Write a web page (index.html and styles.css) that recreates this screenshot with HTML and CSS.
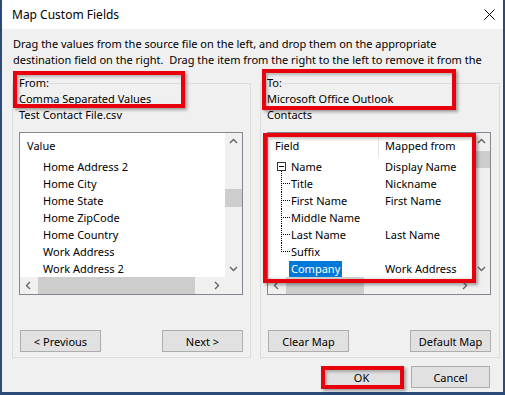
FILE: index.html
```html
<!DOCTYPE html>
<html>
<head>
<meta charset="utf-8">
<link rel="stylesheet" href="styles.css">
</head>
<body>
<div class="window">
  <div class="titlebar">
    <span class="title">Map Custom Fields</span>
    <svg class="close" width="11" height="11" viewBox="0 0 11 11"><path d="M0.5 0.5 L10.5 10.5 M10.5 0.5 L0.5 10.5" stroke="#000" stroke-width="1" fill="none"/></svg>
  </div>
  <div class="content">
    <div class="intro">
      <span>Drag the values from the source file on the left, and drop them on the appropriate</span>
      <span>destination field on the right.&nbsp; Drag the item from the right to the left to remove it from the</span>
    </div>
    <div class="groups">
      <fieldset class="group group-left">
        <legend>From:</legend>
        <div class="line">Comma Separated Values</div>
        <div class="line">Test Contact File.csv</div>
        <div class="listbox">
          <div class="lb-content">
            <div class="lb-head">Value</div>
            <div class="lb-item">Home Address 2</div>
            <div class="lb-item">Home City</div>
            <div class="lb-item">Home State</div>
            <div class="lb-item">Home ZipCode</div>
            <div class="lb-item">Home Country</div>
            <div class="lb-item">Work Address</div>
            <div class="lb-item">Work Address 2</div>
          </div>
          <div class="vscroll">
            <span class="arrow"><svg width="17" height="17" viewBox="0 0 17 17"><polyline points="5,10 8.5,6.5 12,10" fill="none" stroke="#606060" stroke-width="1.3"/></svg></span>
            <span class="track"><span class="vthumb vthumb-left"></span></span>
            <span class="arrow"><svg width="17" height="17" viewBox="0 0 17 17"><polyline points="5,7 8.5,10.5 12,7" fill="none" stroke="#606060" stroke-width="1.3"/></svg></span>
          </div>
          <div class="hscroll">
            <span class="arrow"><svg width="17" height="17" viewBox="0 0 17 17"><polyline points="10,5 6.5,8.5 10,12" fill="none" stroke="#606060" stroke-width="1.3"/></svg></span>
            <span class="track"><span class="hthumb hthumb-left"></span></span>
            <span class="arrow"><svg width="17" height="17" viewBox="0 0 17 17"><polyline points="7,5 10.5,8.5 7,12" fill="none" stroke="#606060" stroke-width="1.3"/></svg></span>
          </div>
          <div class="corner"></div>
        </div>
        <div class="btnrow">
          <button class="btn">&lt; Previous</button>
          <button class="btn">Next &gt;</button>
        </div>
      </fieldset>
      <fieldset class="group group-right">
        <legend>To:</legend>
        <div class="line">Microsoft Office Outlook</div>
        <div class="line">Contacts</div>
        <div class="listbox">
          <div class="lb-content">
            <div class="tv-head"><span class="h1">Field</span><span class="h2">Mapped from</span></div>
            <div class="tv-row">
              <span class="c1"><svg class="gut" width="23" height="17" viewBox="0 0 23 17"><rect x="9.5" y="4.5" width="8" height="8" fill="#fff" stroke="#333"/><line x1="11" y1="8.5" x2="16" y2="8.5" stroke="#000"/><line x1="13.5" y1="13" x2="13.5" y2="17" stroke="#000" stroke-dasharray="1 1"/></svg>Name</span>
              <span class="c2">Display Name</span>
            </div>
            <div class="tv-row">
              <span class="c1"><svg class="gut" width="23" height="17" viewBox="0 0 23 17"><line x1="13.5" y1="0" x2="13.5" y2="17" stroke="#000" stroke-dasharray="1 1"/><line x1="15" y1="8.5" x2="22" y2="8.5" stroke="#000" stroke-dasharray="1 1"/></svg>Title</span>
              <span class="c2">Nickname</span>
            </div>
            <div class="tv-row">
              <span class="c1"><svg class="gut" width="23" height="17" viewBox="0 0 23 17"><line x1="13.5" y1="0" x2="13.5" y2="17" stroke="#000" stroke-dasharray="1 1"/><line x1="15" y1="8.5" x2="22" y2="8.5" stroke="#000" stroke-dasharray="1 1"/></svg>First Name</span>
              <span class="c2">First Name</span>
            </div>
            <div class="tv-row">
              <span class="c1"><svg class="gut" width="23" height="17" viewBox="0 0 23 17"><line x1="13.5" y1="0" x2="13.5" y2="17" stroke="#000" stroke-dasharray="1 1"/><line x1="15" y1="8.5" x2="22" y2="8.5" stroke="#000" stroke-dasharray="1 1"/></svg>Middle Name</span>
              <span class="c2"></span>
            </div>
            <div class="tv-row">
              <span class="c1"><svg class="gut" width="23" height="17" viewBox="0 0 23 17"><line x1="13.5" y1="0" x2="13.5" y2="17" stroke="#000" stroke-dasharray="1 1"/><line x1="15" y1="8.5" x2="22" y2="8.5" stroke="#000" stroke-dasharray="1 1"/></svg>Last Name</span>
              <span class="c2">Last Name</span>
            </div>
            <div class="tv-row">
              <span class="c1"><svg class="gut" width="23" height="17" viewBox="0 0 23 17"><line x1="13.5" y1="0" x2="13.5" y2="9" stroke="#000" stroke-dasharray="1 1"/><line x1="15" y1="8.5" x2="22" y2="8.5" stroke="#000" stroke-dasharray="1 1"/></svg>Suffix</span>
              <span class="c2"></span>
            </div>
            <div class="tv-row">
              <span class="c1"><span class="gut-empty"></span><span class="sel">Company</span></span>
              <span class="c2">Work Address</span>
            </div>
          </div>
          <div class="vscroll">
            <span class="arrow"><svg width="17" height="17" viewBox="0 0 17 17"><polyline points="5,10 8.5,6.5 12,10" fill="none" stroke="#606060" stroke-width="1.3"/></svg></span>
            <span class="track"><span class="vthumb vthumb-right"></span></span>
            <span class="arrow"><svg width="17" height="17" viewBox="0 0 17 17"><polyline points="5,7 8.5,10.5 12,7" fill="none" stroke="#606060" stroke-width="1.3"/></svg></span>
          </div>
          <div class="hscroll">
            <span class="arrow"><svg width="17" height="17" viewBox="0 0 17 17"><polyline points="10,5 6.5,8.5 10,12" fill="none" stroke="#606060" stroke-width="1.3"/></svg></span>
            <span class="track"><span class="hthumb hthumb-right"></span></span>
            <span class="arrow"><svg width="17" height="17" viewBox="0 0 17 17"><polyline points="7,5 10.5,8.5 7,12" fill="none" stroke="#606060" stroke-width="1.3"/></svg></span>
          </div>
          <div class="corner"></div>
        </div>
        <div class="btnrow">
          <button class="btn">Clear Map</button>
          <button class="btn">Default Map</button>
        </div>
      </fieldset>
    </div>
    <div class="footer">
      <button class="btn btn-dlg btn-ok">OK</button>
      <button class="btn btn-dlg">Cancel</button>
    </div>
  </div>
  <div class="mark mark-from"></div>
  <div class="mark mark-to"></div>
  <div class="mark mark-field"></div>
  <div class="mark mark-ok"></div>
</div>
</body>
</html>
```

FILE: styles.css
```css
* { box-sizing: border-box; }
html, body { margin: 0; padding: 0; }
body {
  width: 505px;
  height: 395px;
  overflow: hidden;
  font-family: "Noto Sans", "Open Sans", sans-serif;
  font-size: 11px;
  color: #000;
}
.window {
  position: relative;
  width: 505px;
  height: 395px;
  background: #f0f0f0;
  border-left: 2px solid #2b4a78;
  border-right: 2px solid #2b4a78;
  border-bottom: 3px solid #2b4a78;
  display: flex;
  flex-direction: column;
}
.titlebar {
  height: 29px;
  flex: none;
  background: #fff;
  display: flex;
  align-items: center;
  justify-content: space-between;
  padding: 0 8px 0 10px;
}
.title { font-size: 12px; }
.close { display: block; }
.content {
  padding: 7px 3px 0 10px;
  display: flex;
  flex-direction: column;
}
.intro {
  padding-left: 1px;
  overflow: hidden;
}
.intro span {
  display: block;
  white-space: nowrap;
  line-height: 16px;
}
.groups {
  display: grid;
  grid-template-columns: 239px 240px;
  column-gap: 9px;
  margin-top: 7px;
}
.group {
  margin: 0;
  min-width: 0;
  border: 1px solid #dcdcdc;
  padding: 0 7px 5px 6px;
}
.group-right { padding-right: 8px; }
.group legend {
  padding: 0;
  margin-left: 0;
  line-height: 16px;
}
.line { line-height: 16px; }
.listbox {
  margin-top: 9px;
  height: 163px;
  border: 1px solid #828790;
  background: #fff;
  display: grid;
  grid-template-columns: 1fr 17px;
  grid-template-rows: 1fr 17px;
}
.lb-content { overflow: hidden; min-width: 0; min-height: 0; }
.lb-head { height: 25px; line-height: 26px; padding-left: 7px; }
.lb-item { height: 17px; line-height: 17px; padding-left: 23px; white-space: nowrap; }
.vscroll {
  background: #f0f0f0;
  display: flex;
  flex-direction: column;
}
.hscroll {
  background: #f0f0f0;
  display: flex;
}
.arrow { flex: none; width: 17px; height: 17px; }
.arrow svg { display: block; }
.track { flex: 1; display: flex; }
.vscroll .track { flex-direction: column; }
.vthumb { display: block; width: 17px; background: #cdcdcd; flex: none; }
.vthumb-left { margin-top: 39px; height: 18px; }
.vthumb-right { margin-top: 1px; height: 17px; }
.hthumb { display: block; height: 17px; background: #cdcdcd; flex: none; margin-left: 1px; }
.hthumb-left { width: 157px; }
.hthumb-right { width: 78px; }
.corner { background: #f0f0f0; }
.tv-head { height: 25px; display: flex; }
.tv-head .h1 {
  width: 111px;
  padding-left: 7px;
  line-height: 26px;
  border-right: 1px solid #e5e5e5;
  height: 24px;
}
.tv-head .h2 { padding-left: 6px; line-height: 26px; }
.tv-row { height: 17px; display: flex; line-height: 17px; white-space: nowrap; }
.tv-row .c1 { width: 111px; display: flex; align-items: center; }
.tv-row .c2 { padding-left: 6px; }
.gut { display: block; flex: none; }
.gut-empty { width: 21px; flex: none; }
.sel {
  background: #0078d7;
  color: #fff;
  padding: 0 2px;
  line-height: 16px;
}
.btnrow {
  display: flex;
  justify-content: space-between;
  margin-top: 35px;
  padding-left: 1px;
}
.btn {
  width: 81px;
  height: 22px;
  padding: 0;
  margin: 0;
  border: 1px solid #adadad;
  background: #e1e1e1;
  font-family: inherit;
  font-size: 11px;
  color: #000;
}
.footer {
  display: flex;
  justify-content: flex-end;
  gap: 10px;
  margin-top: 8px;
  padding-right: 10px;
}
.btn-dlg { width: 79px; }
.btn-ok { border-color: #0078d7; }
.mark {
  position: absolute;
  border: 4px solid #e8000d;
  box-shadow: 2px 2px 3px rgba(0,0,0,0.35), inset 2px 2px 3px rgba(0,0,0,0.25);
}
.mark-from { left: 11px; top: 71px; width: 172px; height: 37px; }
.mark-to { left: 260px; top: 69px; width: 194px; height: 41px; }
.mark-field { left: 261px; top: 133px; width: 213px; height: 150px; }
.mark-ok { left: 319px; top: 366px; width: 83px; height: 23px; }
```
